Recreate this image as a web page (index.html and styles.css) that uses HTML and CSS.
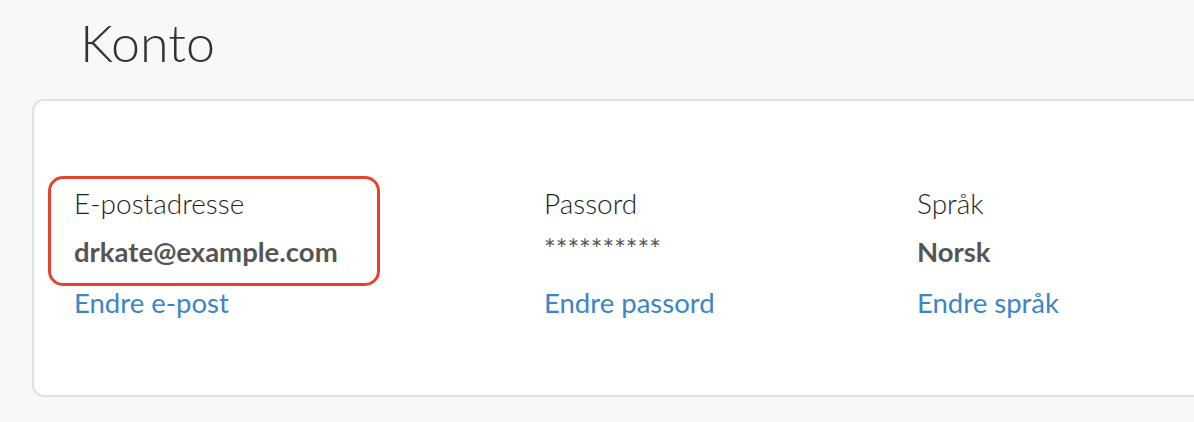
FILE: index.html
```html
<!DOCTYPE html>
<html lang="no">
<head>
<meta charset="utf-8">
<title>Konto</title>
<link rel="stylesheet" href="styles.css">
</head>
<body>
<main class="page">
  <h1 class="title">Konto</h1>
  <section class="card">
    <div class="fields">
      <div class="field field-email">
        <div class="label">E-postadresse</div>
        <div class="value">drkate@example.com</div>
        <a class="link" href="#">Endre e-post</a>
        <span class="highlight"></span>
      </div>
      <div class="field">
        <div class="label">Passord</div>
        <div class="value stars">**********</div>
        <a class="link" href="#">Endre passord</a>
      </div>
      <div class="field">
        <div class="label">Språk</div>
        <div class="value">Norsk</div>
        <a class="link" href="#">Endre språk</a>
      </div>
    </div>
  </section>
</main>
</body>
</html>
```
FILE: styles.css
```css
html, body {
  margin: 0;
  padding: 0;
}
body {
  background: #f8f8f8;
  font-family: Lato, "Open Sans", sans-serif;
  overflow: hidden;
  width: 1194px;
  height: 422px;
}
.page {
  padding: 0 0 0 32px;
}
.title {
  margin: 0;
  padding: 10px 0 0 48px;
  height: 99px;
  box-sizing: border-box;
  font-size: 52px;
  font-weight: 300;
  color: #333;
  line-height: 64px;
}
.card {
  width: 1300px;
  height: 298px;
  box-sizing: border-box;
  background: #fff;
  border: 2px solid #e2e2e2;
  border-radius: 12px;
  padding: 82px 0 0 40px;
}
.fields {
  display: grid;
  grid-template-columns: 470px 373px 1fr;
}
.field {
  position: relative;
  display: flex;
  flex-direction: column;
  align-items: flex-start;
}
.label {
  font-size: 28px;
  font-weight: 300;
  color: #1e1e1e;
  line-height: 40px;
}
.value {
  font-size: 27.5px;
  font-weight: 700;
  color: #555;
  line-height: 57px;
}
.stars {
  font-weight: 400;
  font-size: 27.5px;
  line-height: 52px;
  margin-bottom: 5px;
}
.link {
  font-size: 27.5px;
  color: #3b86c6;
  text-decoration: none;
  line-height: 46px;
}
.highlight {
  position: absolute;
  left: -26px;
  top: -7px;
  width: 332px;
  height: 110px;
  box-sizing: border-box;
  border: 3px solid #e5432a;
  border-radius: 15px;
}
```
